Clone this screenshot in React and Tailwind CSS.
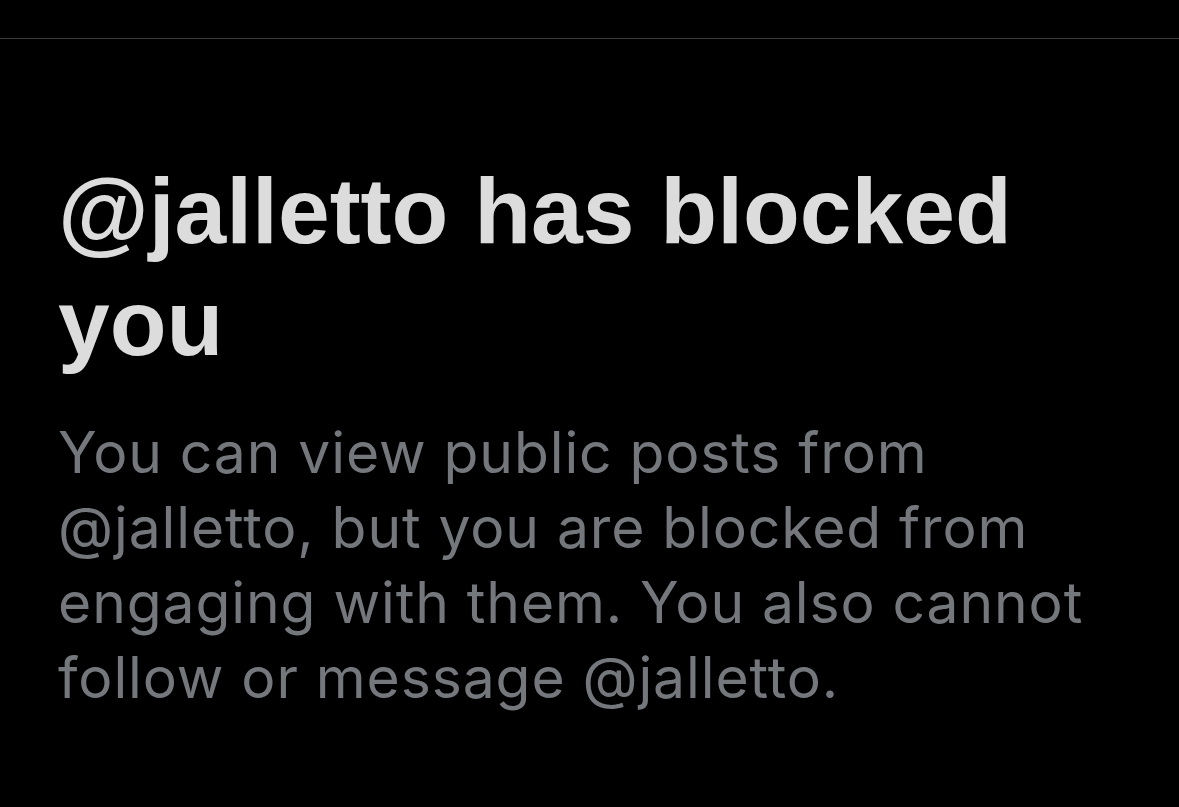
export default function App() {
  return (
    <div className="min-h-[807px] w-full bg-black">
      <div className="h-[38px]" />
      <div className="h-px bg-[#3a3a3a]" />
      <div className="pl-[58px] pt-[116px]">
        <h1
          className="text-[93px] font-bold leading-[112px] text-[#dcdcdc]"
          style={{ fontFamily: '"Liberation Sans", Arial, sans-serif' }}
        >
          @jalletto has blocked
          <br />
          you
        </h1>
        <p
          className="mt-[36px] text-[57px] leading-[75px] tracking-[0.9px] text-[#74777c]"
          style={{ fontFamily: 'Inter, "Noto Sans", sans-serif' }}
        >
          You can view public posts from
          <br />
          @jalletto, but you are blocked from
          <br />
          engaging with them. You also cannot
          <br />
          follow or message @jalletto.
        </p>
      </div>
    </div>
  );
}
